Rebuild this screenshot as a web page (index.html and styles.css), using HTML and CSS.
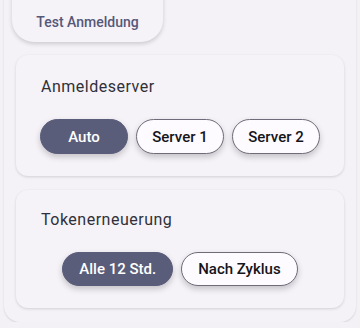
FILE: index.html
```html
<!DOCTYPE html>
<html lang="de">
<head>
    <meta charset="UTF-8">
    <meta name="viewport" content="width=device-width, initial-scale=1.0">
    <title>Anmeldung</title>
    <link rel="stylesheet" href="styles.css">
</head>
<body>
    <!-- Äußere Karte mit den Einstellungen -->
    <div class="panel">
        <button class="test-btn">Test Anmeldung</button>

        <!-- Auswahl des Servers -->
        <div class="card">
            <div class="card-title">Anmeldeserver</div>
            <div class="choices">
                <button class="chip active">Auto</button>
                <button class="chip">Server 1</button>
                <button class="chip">Server 2</button>
            </div>
        </div>

        <!-- Tokenerneuerung -->
        <div class="card">
            <div class="card-title">Tokenerneuerung</div>
            <div class="choices">
                <button class="chip wide active">Alle 12 Std.</button>
                <button class="chip wide">Nach Zyklus</button>
            </div>
        </div>
    </div>
</body>
</html>
```

FILE: styles.css
```css
* {
    margin: 0;
    padding: 0;
    box-sizing: border-box;
    font-family: Roboto, "Liberation Sans", sans-serif;
}

body {
    background: #f3f0f6;
    padding: 0 4px;
    overflow: hidden;
}

/* Äußere Karte */
.panel {
    margin-top: -30px;
    padding: 0 12px 14px;
    border-radius: 16px;
    background: #f4f1f7;
    box-shadow: 0 1px 2px rgba(0, 0, 0, 0.12);
    display: flex;
    flex-direction: column;
    gap: 13px;
}

/* Knopf oben */
.test-btn {
    align-self: flex-start;
    margin-left: -4px;
    width: 151px;
    height: 72px;
    padding-top: 31px;
    border: none;
    border-radius: 22px;
    background: #f5f2f8;
    color: #555878;
    font-size: 14px;
    font-weight: 500;
    box-shadow: 0 2px 4px rgba(0, 0, 0, 0.16);
}

/* Innere Karten */
.card {
    background: #f5f2f8;
    border-radius: 12px;
    box-shadow: 0 1px 3px rgba(0, 0, 0, 0.14);
    padding: 22px 24px 22px;
}

.card + .card {
    margin-top: 1px;
    padding-top: 20px;
    padding-bottom: 22px;
}

.card-title {
    font-size: 16px;
    line-height: 20px;
    letter-spacing: 0.5px;
    color: #303038;
    margin-bottom: 22px;
    margin-left: 1px;
}

/* Auswahlknöpfe */
.choices {
    display: flex;
    justify-content: center;
    gap: 8px;
}

.chip {
    flex-shrink: 0;
    white-space: nowrap;
    min-width: 88px;
    height: 35px;
    padding: 0 14px;
    border: 1px solid #6e6c78;
    border-radius: 18px;
    background: #fdfbff;
    color: #15141a;
    font-size: 15px;
    font-weight: 500;
    box-shadow: 0 3px 6px rgba(0, 0, 0, 0.2);
}

.chip.wide {
    height: 34px;
    padding: 0 16px;
}

.chip.active {
    background: #5a5d7a;
    border-color: #5a5d7a;
    color: #ffffff;
}
```
